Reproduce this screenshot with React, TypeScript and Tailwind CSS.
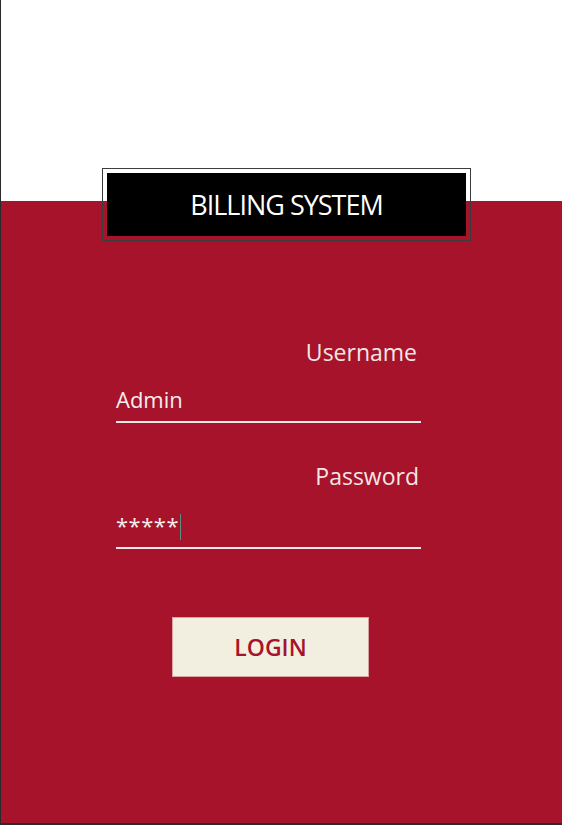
import React from 'react';

const App: React.FC = () => {
  return (
    <div className="h-[825px] w-full flex flex-col bg-white border-l border-[#2a2a2a] font-['Open_Sans',sans-serif] overflow-hidden">
      {/* Top white area */}
      <div className="h-[201px] shrink-0 bg-white" />

      {/* Red panel */}
      <div className="flex-1 bg-[#a6132a] flex flex-col">
        {/* Title box */}
        <div className="-mt-[33px] ml-[101px] w-[369px] h-[73px] border border-[#3c3c3c] p-[4px]">
          <div className="h-full w-full bg-black flex items-center justify-center">
            <span className="text-[27px] leading-none tracking-[-1px] text-white">BILLING SYSTEM</span>
          </div>
        </div>

        {/* Form */}
        <div className="ml-[115px] w-[305px] flex flex-col">
          <div className="mt-[96px] text-right pr-[4px] text-[23px] leading-[31px] text-[#f3e6e6]">Username</div>
          <div className="mt-[16px] text-[22px] leading-[30px] pb-[7px] border-b-2 border-[#f1e9e9] text-[#f6eeee]">
            Admin
          </div>

          <div className="mt-[38px] text-right pr-[2px] text-[23px] leading-[31px] text-[#f3e6e6]">Password</div>
          <div className="mt-[22px] h-[35px] border-b-2 border-[#f1e9e9] flex items-start">
            <span className="text-[22px] leading-[22px] text-[#f6eeee] tracking-[0.5px]">*****</span>
            <span className="ml-[1px] w-px h-[26px] bg-[#5c8c84]" />
          </div>
        </div>

        <button className="mt-[68px] ml-[171px] w-[197px] h-[60px] bg-[#f3efe0] border border-[#d9a3a3] text-[#a6132a] text-[23px] font-semibold">
          LOGIN
        </button>
      </div>

      {/* Bottom edge */}
      <div className="h-[2px] shrink-0 bg-[#2b2b2b]" />
    </div>
  );
};

export default App;
